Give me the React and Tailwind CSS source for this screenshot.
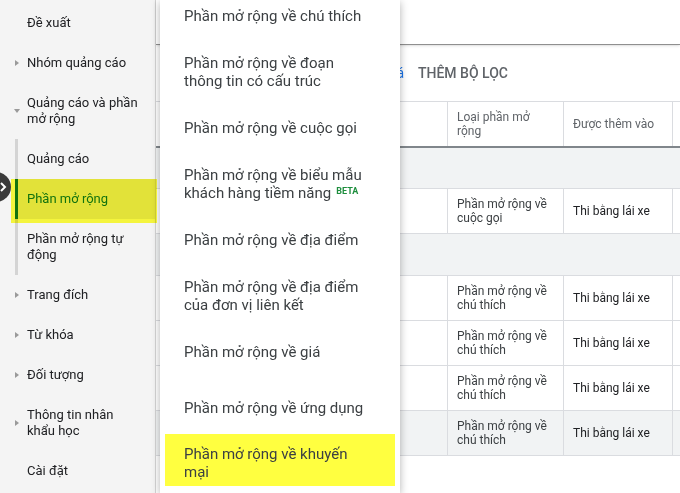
import { useState } from "react"

const font = { fontFamily: "Roboto, 'Noto Sans', Arial, sans-serif" }

const Caret = ({ open }) =>
  open ? (
    <span className="ml-[14px] mr-[7px] h-0 w-0 border-x-[3px] border-t-[4px] border-x-transparent border-t-[#9a9a9a]" />
  ) : (
    <span className="ml-[15px] mr-[8px] h-0 w-0 border-y-[3px] border-l-[4px] border-y-transparent border-l-[#9a9a9a]" />
  )

const SideItem = ({ label, caret, open, tall }) => (
  <div className={`flex items-center ${tall ? "h-[56px]" : "h-10"} ${caret ? "" : "pl-[27px]"}`}>
    {caret && <Caret open={open} />}
    <span className="leading-[16px] text-[13px] text-[#202124]">{label}</span>
  </div>
)

const SubItem = ({ label, tall, active }) => (
  <div
    className={`ml-[15px] flex items-center border-l-[3px] pl-[9px] ${tall ? "h-[56px]" : "h-10"} ${
      active ? "border-[#137333] bg-[#e2e2e2] text-[#137333]" : "border-[#d4d4d4] text-[#202124]"
    }`}
  >
    <span className="text-[13px] leading-[16px]">{label}</span>
  </div>
)

const Sidebar = () => (
  <div className="w-[156px] shrink-0 border-r border-[#d4d4d4] bg-[#f4f4f4] pt-[3px]">
    <SideItem label="Đề xuất" />
    <SideItem label="Nhóm quảng cáo" caret />
    <SideItem
      label={
        <>
          Quảng cáo và phần
          <br />
          mở rộng
        </>
      }
      caret
      open
      tall
    />
    <SubItem label="Quảng cáo" />
    <SubItem label="Phần mở rộng" active />
    <SubItem
      label={
        <>
          Phần mở rộng tự
          <br />
          động
        </>
      }
      tall
    />
    <SideItem label="Trang đích" caret />
    <SideItem label="Từ khóa" caret />
    <SideItem label="Đối tượng" caret />
    <SideItem
      label={
        <>
          Thông tin nhân
          <br />
          khẩu học
        </>
      }
      caret
      tall
    />
    <SideItem label="Cài đặt" />
  </div>
)

const cols = "grid grid-cols-[291px_116px_109px_1fr]"

const DataRow = ({ type, hover }) => (
  <div className={`${cols} h-[45px] border-b border-[#dadce0] ${hover ? "bg-[#f1f3f4]" : "bg-white"}`}>
    <div />
    <div className="flex items-center border-l border-[#dadce0] pl-[9px] text-[12px] leading-[14px] text-[#3c4043]">
      {type}
    </div>
    <div className="flex items-center border-l border-[#dadce0] pl-[9px] text-[12px] text-[#202124]">
      Thi bằng lái xe
    </div>
    <div className="border-l border-[#dadce0]" />
  </div>
)

const GroupRow = ({ h }) => <div className={`${h} border-b border-[#dadce0] bg-[#f1f3f4]`} />

const chuThich = (
  <>
    Phần mở rộng về
    <br />
    chú thích
  </>
)

const Main = () => (
  <div className="flex-1 bg-white">
    <div className="h-[45px] border-b border-[#8f8f8f] shadow-sm" />
    <div className="flex h-[57px] items-center border-b border-[#dadce0]">
      <div className="w-[248px] text-right text-[14px] text-[#1a73e8]">Giá</div>
      <div className="ml-[14px] text-[14px] font-medium text-[#5f6368]">THÊM BỘ LỌC</div>
    </div>
    <div className={`${cols} h-[46px] border-b-2 border-[#80868b]`}>
      <div />
      <div className="flex items-center border-l border-[#dadce0] pl-[9px] text-[12px] leading-[14px] text-[#5f6368]">
        Loại phần mở
        <br />
        rộng
      </div>
      <div className="flex items-center border-l border-[#dadce0] pl-[9px] text-[12px] text-[#5f6368]">
        Được thêm vào
      </div>
      <div className="border-l border-[#dadce0]" />
    </div>
    <GroupRow h="h-[41px]" />
    <DataRow
      type={
        <>
          Phần mở rộng về
          <br />
          cuộc gọi
        </>
      }
    />
    <GroupRow h="h-[42px]" />
    <DataRow type={chuThich} />
    <DataRow type={chuThich} />
    <DataRow type={chuThich} />
    <DataRow type={chuThich} hover />
  </div>
)

const menuItems = [
  ["Phần mở rộng về chú thích"],
  ["Phần mở rộng về đoạn", "thông tin có cấu trúc"],
  ["Phần mở rộng về cuộc gọi"],
  ["Phần mở rộng về biểu mẫu", "khách hàng tiềm năng", "beta"],
  ["Phần mở rộng về địa điểm"],
  ["Phần mở rộng về địa điểm", "của đơn vị liên kết"],
  ["Phần mở rộng về giá"],
  ["Phần mở rộng về ứng dụng"],
  ["Phần mở rộng về khuyến", "mại", "marked"],
]

const Menu = () => (
  <div className="absolute left-[160px] top-0 h-[493px] w-[240px] overflow-hidden bg-white shadow-[0_2px_8px_rgba(0,0,0,0.3)]">
    <div className="-mt-[12px] flex flex-col">
      {menuItems.map(([a, b, flag], i) => (
        <div key={i} className="h-14">
          <div
            className={`flex items-center text-[15px] leading-[18px] text-[#3c4043] ${
              flag === "marked"
                ? "mx-[5px] -mt-[2px] h-[52px] bg-[#ffff40] pl-[19px] pt-[6px]"
                : "h-full pl-[24px]"
            }`}
          >
            <span>
              {a}
              {b && <br />}
              {b}
              {flag === "beta" && (
                <sup className="ml-[5px] text-[9px] font-bold text-[#1e8e3e]">BETA</sup>
              )}
            </span>
          </div>
        </div>
      ))}
    </div>
  </div>
)

export default function App() {
  const [open] = useState(true)

  return (
    <div className="relative flex h-[493px] w-[680px] overflow-hidden" style={font}>
      <Sidebar />
      <Main />
      {open && <Menu />}
      {/* marker highlight over the selected nav item */}
      <div className="absolute left-[11px] top-[179px] h-[44px] w-[146px] bg-[#ffff40] mix-blend-multiply" />
      {/* collapse toggle */}
      <div className="absolute -left-[19px] top-[172px] flex h-[30px] w-[30px] items-center justify-end rounded-full bg-[#3a3a3a] pr-[4px]">
        <svg width="8" height="10" viewBox="0 0 8 10">
          <path d="M2 1l4 4-4 4" fill="none" stroke="#fff" strokeWidth="2" />
        </svg>
      </div>
    </div>
  )
}
